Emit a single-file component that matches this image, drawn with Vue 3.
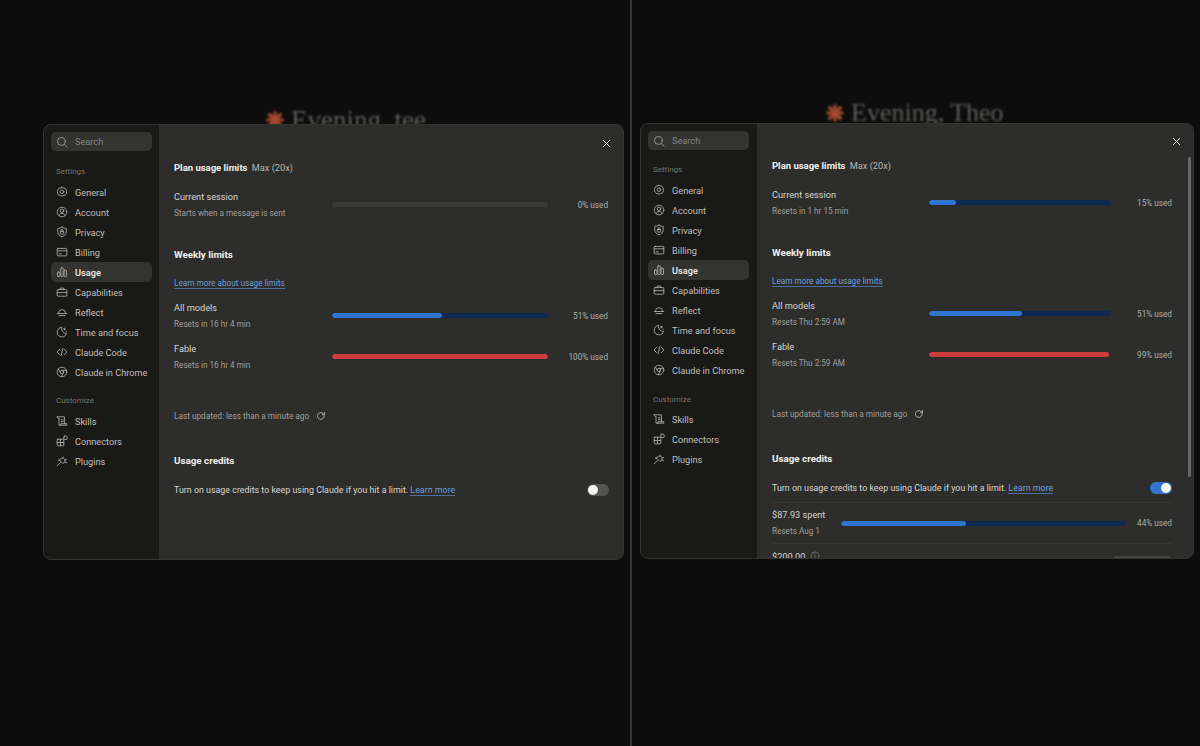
<script setup>
const nav1 = [
  { id: 'gear', label: 'General' },
  { id: 'user', label: 'Account' },
  { id: 'shield', label: 'Privacy' },
  { id: 'card', label: 'Billing' },
  { id: 'bars', label: 'Usage', active: true },
  { id: 'case', label: 'Capabilities' },
  { id: 'dome', label: 'Reflect' },
  { id: 'moon', label: 'Time and focus' },
  { id: 'code', label: 'Claude Code' },
  { id: 'chrome', label: 'Claude in Chrome' }
]
const nav2 = [
  { id: 'scroll', label: 'Skills' },
  { id: 'blocks', label: 'Connectors' },
  { id: 'plug', label: 'Plugins' }
]
const panes = [
  {
    key: 'a', greeting: 'Evening, tee',
    session: 'Starts when a message is sent', sessionPct: 0,
    rows: [
      { name: 'All models', sub: 'Resets in 16 hr 4 min', pct: 51, tone: 'blue' },
      { name: 'Fable', sub: 'Resets in 16 hr 4 min', pct: 100, tone: 'red' }
    ],
    credits: false
  },
  {
    key: 'b', greeting: 'Evening, Theo',
    session: 'Resets in 1 hr 15 min', sessionPct: 15,
    rows: [
      { name: 'All models', sub: 'Resets Thu 2:59 AM', pct: 51, tone: 'blue' },
      { name: 'Fable', sub: 'Resets Thu 2:59 AM', pct: 99, tone: 'red' }
    ],
    credits: true
  }
]
</script>

<template>
  <div class="page">
    <template v-for="(p, i) in panes" :key="p.key">
      <div v-if="i === 1" class="divider"></div>
      <section class="pane" :class="'pane-' + p.key">
        <div class="greeting">
          <svg class="spark" viewBox="0 0 20 20"><g stroke="#a2492f" stroke-width="3.2" stroke-linecap="round"><path d="M10 10V2.500M10 10v7.500M10 10H2.500M10 10h7.500M10 10 4.500 4.500M10 10l5.500-5.500M10 10l-5.500 5.500M10 10l5.500 5.500"/></g></svg>
          <span>{{ p.greeting }}</span>
        </div>
        <div class="modal">
          <aside class="side">
            <div class="search">
              <svg class="ico" viewBox="0 0 20 20"><circle cx="9" cy="9" r="6.500"/><path d="m14 14 4.500 4.500"/></svg>
              <span>Search</span>
            </div>
            <div class="cap">Settings</div>
            <template v-for="n in nav1" :key="n.label">
              <div class="nav" :class="{ on: n.active }">
                <svg class="ico" viewBox="0 0 20 20">
                  <g v-if="n.id === 'gear'"><path d="M10 1.800l2 1.600 2.600-.2 1 2.400 2.200 1.400-.6 2.600.6 2.600-2.200 1.400-1 2.400-2.600-.2-2 1.600-2-1.600-2.600.2-1-2.400-2.200-1.400.6-2.600-.6-2.600 2.200-1.400 1-2.400 2.600.2z"/><circle cx="10" cy="9.600" r="3"/></g>
                  <g v-else-if="n.id === 'user'"><circle cx="10" cy="10" r="8"/><circle cx="10" cy="8" r="3"/><path d="M4.800 15.800c1-2.400 3-3.400 5.200-3.400s4.200 1 5.200 3.400"/></g>
                  <g v-else-if="n.id === 'shield'"><path d="M10 1.800c2 1.500 4.500 2.200 7 2.200v6c0 4-3 6.500-7 8.200-4-1.700-7-4.200-7-8.200V4c2.500 0 5-.7 7-2.200z"/><rect x="7.200" y="9" width="5.600" height="4.500" rx="1"/><path d="M8.200 9V7.800a1.800 1.800 0 0 1 3.600 0V9"/></g>
                  <g v-else-if="n.id === 'card'"><rect x="2" y="4" width="16" height="12.500" rx="1.500"/><path d="M2 8h16M5 13h4"/></g>
                  <g v-else-if="n.id === 'bars'"><rect x="2.500" y="10" width="4" height="7.500" rx="1"/><rect x="8" y="3" width="4" height="14.500" rx="1"/><rect x="13.500" y="7" width="4" height="10.500" rx="1"/></g>
                  <g v-else-if="n.id === 'case'"><rect x="2" y="6" width="16" height="11" rx="1.500"/><path d="M7 6V3.500h6V6M2 11h16"/></g>
                  <g v-else-if="n.id === 'dome'"><path d="M4 12a6 6 0 0 1 12 0M2 12.500h16M5 16h10"/></g>
                  <g v-else-if="n.id === 'moon'"><path d="M9 2.500a7.800 7.800 0 1 0 8.500 9.500c-4.500 1-8.500-3-8.500-9.500z"/><path d="M14 3.500v3M12.500 5h3M17 8.500v.5"/></g>
                  <g v-else-if="n.id === 'code'"><path d="M6 5.500 1.800 10 6 14.500M14 5.500l4.200 4.500-4.200 4.500M11.500 4 8.500 16"/></g>
                  <g v-else-if="n.id === 'chrome'"><circle cx="10" cy="10" r="8"/><circle cx="10" cy="10" r="2.800"/><path d="M10 7.200h7.300M7.600 11.400 3.900 5M12.400 11.400 8.800 17.800"/></g>
                </svg>
                <span>{{ n.label }}</span>
              </div>
            </template>
            <div class="cap cap2">Customize</div>
            <div v-for="n in nav2" :key="n.label" class="nav">
              <svg class="ico" viewBox="0 0 20 20">
                <g v-if="n.id === 'scroll'"><path d="M2 3h12v12M2 3c0 2 1 3 3 3M5 6v11h13v-2.500H8v2.500M9 8h3M9 11h3"/></g>
                <g v-else-if="n.id === 'blocks'"><rect x="2" y="7" width="11" height="11" rx="1"/><path d="M7.500 7v11M2 12.500h11"/><rect x="13" y="2" width="5.500" height="5.500" rx="1"/></g>
                <g v-else-if="n.id === 'plug'"><path d="M6 8.500 11.500 14c2.500-.5 4.500-3 3.500-6-1-2.500-4-3.500-6-2.500-1.500.6-2.700 1.500-3 3z"/><path d="M2 18l4.500-4.500 1-1M12 3.500 11 5.500M17.500 7.500l-2.500.7M18 13l-3-1.500M3.800 8.500l2.200 0"/></g>
              </svg>
              <span>{{ n.label }}</span>
            </div>
          </aside>

          <main class="main">
            <svg class="close" viewBox="0 0 10 10"><path d="M1.500 1.500l7 7M8.500 1.500l-7 7"/></svg>
            <div v-if="p.credits" class="thumb"></div>
            <h2 class="title plan">Plan usage limits <span>Max (20x)</span></h2>

            <div class="row first">
              <div class="meta"><div class="name">Current session</div><div class="sub">{{ p.session }}</div></div>
              <div class="track" :class="{ blank: p.sessionPct === 0 }"><i class="fill blue" :style="{ width: p.sessionPct + '%' }"></i></div>
              <div class="pct">{{ p.sessionPct }}% used</div>
            </div>

            <h2 class="title weekly">Weekly limits</h2>
            <div class="learn"><a>Learn more about usage limits</a></div>

            <div v-for="(r, ri) in p.rows" :key="r.name" class="row" :class="ri === 0 ? 'r1' : 'r2'">
              <div class="meta"><div class="name">{{ r.name }}</div><div class="sub">{{ r.sub }}</div></div>
              <div class="track" :class="r.tone === 'red' ? 'redtrack' : ''"><i class="fill" :class="r.tone" :style="{ width: r.pct + '%' }"></i></div>
              <div class="pct">{{ r.pct }}% used</div>
            </div>

            <div class="updated">
              <span>Last updated: less than a minute ago</span>
              <svg class="ico" viewBox="0 0 20 20"><path d="M16.500 10a6.800 6.800 0 1 1-2-4.800L17 7.500M17 3v4.500h-4.500"/></svg>
            </div>

            <h2 class="title credits">Usage credits</h2>
            <div class="toggle-row" :class="{ lined: p.credits }">
              <span class="desc">Turn on usage credits to keep using Claude if you hit a limit. <a>Learn more</a></span>
              <span class="toggle" :class="{ onn: p.credits }"><i></i></span>
            </div>

            <template v-if="p.credits">
              <div class="spent">
                <div class="meta-s"><div class="name">$87.93 spent</div><div class="sub">Resets Aug 1</div></div>
                <div class="track"><i class="fill blue" style="width:44%"></i></div>
                <div class="pct">44% used</div>
              </div>
              <div class="limit">
                <div class="name">$200.00
                  <svg class="ico info" viewBox="0 0 20 20"><circle cx="10" cy="10" r="8"/><path d="M10 9v5M10 6v.5"/></svg>
                </div>
                <div class="btn"></div>
              </div>
            </template>
          </main>
        </div>
      </section>
    </template>
  </div>
</template>

<style>
html, body { margin: 0; background: #0d0d0d; }
</style>

<style scoped>
.page {
  width: 1200px; height: 746px; display: flex; overflow: hidden;
  background: #0d0d0d; color: #e8e6e1;
  font-family: Roboto, "Liberation Sans", sans-serif; font-size: 9.2px;
}
.divider { width: 2px; background: #333; flex: none; }
.pane { position: relative; height: 746px; flex: none; }
.pane-a { width: 630px; }
.pane-b { width: 568px; }
.greeting {
  display: flex; align-items: center; gap: 6px; position: absolute;
  font-family: "Liberation Serif", serif; line-height: 30px; color: #5f5e5a; white-space: nowrap;
  filter: blur(0.8px);
}
.pane-a .greeting { left: 265px; top: 105px; font-size: 27px; }
.pane-b .greeting { left: 193px; top: 98px; font-size: 26px; }
.spark { width: 20px; height: 20px; }
.modal {
  position: absolute; display: flex; height: 436px; overflow: hidden; box-sizing: border-box;
  border-radius: 8px; border: 1px solid #34342f; background: #2d2d2c;
}
.pane-a .modal { left: 43px; top: 124px; width: 581px; }
.pane-b .modal { left: 8px; top: 123px; width: 554px; }
.side { flex: none; width: 115px; box-sizing: border-box; padding: 7px 7px 0 7px; background: #191918; }
.pane-b .side { width: 116px; padding-right: 8px; }
.ico { width: 12px; height: 12px; flex: none; fill: none; stroke: currentColor; stroke-width: 1.4; stroke-linecap: round; stroke-linejoin: round; }
.search {
  display: flex; align-items: center; gap: 7px; height: 19px; padding-left: 5px; border-radius: 5px;
  background: #333332; color: #83817c;
}
.search .ico { color: #a3a19c; }
.cap { margin: 14px 0 4px 5px; height: 12px; line-height: 12px; font-size: 8px; color: #77756f; }
.pane-a .cap { margin-top: 15px; }
.pane-a .cap2 { margin-top: 13px; }
.pane-b .cap2 { margin-top: 14px; margin-bottom: 3px; }
.nav { display: flex; align-items: center; gap: 7px; height: 20px; padding-left: 5px; border-radius: 5px; color: #c0beb8; white-space: nowrap; }
.nav .ico { color: #b2b0aa; }
.nav.on { background: #333332; color: #f2f0eb; font-weight: 500; }
.main { position: relative; flex: 1; min-width: 0; box-sizing: border-box; padding: 36px 15px 0 15px; }
.pane-b .main { padding-top: 35px; padding-right: 21px; }
.close { position: absolute; top: 14px; right: 12px; width: 9px; height: 9px; fill: none; stroke: #ecebe6; stroke-width: 1.1; stroke-linecap: round; }
.pane-b .close { top: 13px; }
.thumb { position: absolute; top: 33px; right: 2px; width: 3px; height: 320px; border-radius: 2px; background: #666665; }
.title { margin: 0; height: 14px; line-height: 14px; font-size: 9.8px; font-weight: 700; color: #f2f0eb; }
.title.plan { font-size: 9.5px; }
.title span { margin-left: 2px; font-size: 9.2px; font-weight: 400; color: #b7b5af; }
.weekly { margin-top: 27px; }
.row { display: grid; grid-template-columns: 158px 1fr 60px; align-items: center; height: 32px; }
.pane-b .row { grid-template-columns: 157px 1fr 61px; }
.row .track { margin-bottom: 2px; }
.first { margin-top: 14px; }
.r1 { margin-top: 10px; }
.r2 { margin-top: 9px; }
.name { line-height: 16px; color: #d6d4ce; }
.sub { line-height: 16px; font-size: 8.2px; color: #a19f99; }
.track { height: 5px; border-radius: 3px; background: #0f2a52; overflow: hidden; }
.track.blank { background: #3a3a39; }
.track.redtrack { background: #4a2222; }
.fill { display: block; height: 100%; border-radius: 3px; }
.fill.blue { background: #2f74d0; }
.fill.red { background: #ce3d3d; }
.pct { text-align: right; font-size: 8.2px; color: #b0aea8; }
.learn { margin-top: 14px; height: 14px; line-height: 14px; font-size: 8.2px; }
a { color: #6f9fdc; border-bottom: 1px solid #4d6f9e; }
.updated { display: flex; align-items: center; gap: 7px; margin-top: 36px; height: 14px; font-size: 8.25px; color: #a19f99; }
.updated .ico { width: 10px; height: 10px; color: #d6d4ce; }
.credits { margin-top: 31px; }
.toggle-row { display: flex; align-items: center; justify-content: space-between; margin-top: 15px; height: 14px; }
.pane-a .toggle { margin-right: -1px; }
.toggle-row.lined { padding-bottom: 7px; border-bottom: 1px solid #363635; }
.desc { font-size: 8.9px; color: #d6d4ce; }
.toggle { display: flex; align-items: center; width: 22px; height: 12px; box-sizing: border-box; padding: 0 1px; border-radius: 6px; background: #55554f; }
.toggle i { width: 10px; height: 10px; border-radius: 50%; background: #f4f3ef; }
.toggle.onn { justify-content: flex-end; background: #2f74d0; }
.spent { display: grid; grid-template-columns: 69px 1fr 46px; align-items: center; height: 40px; border-bottom: 1px solid #363635; }
.spent .pct { white-space: nowrap; }
.limit { display: flex; justify-content: space-between; padding-top: 5px; }
.info { width: 10px; height: 10px; vertical-align: -1px; margin-left: 2px; color: #85837d; }
.btn { width: 60px; height: 20px; margin-top: 7px; border-radius: 5px; background: #444443; }
</style>
